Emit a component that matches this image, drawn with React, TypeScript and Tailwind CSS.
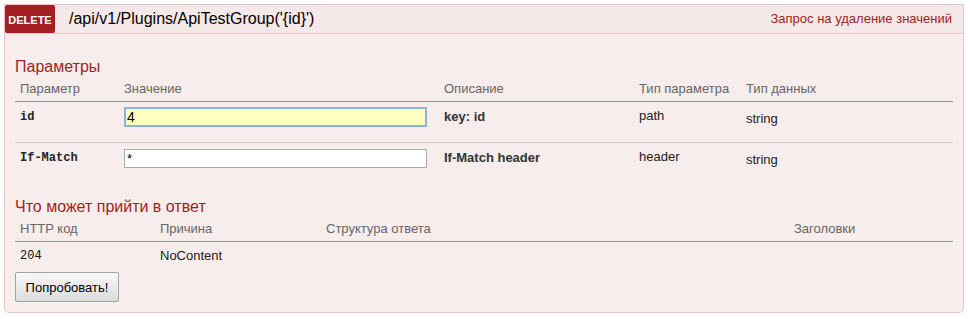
import React from "react";

const sans = { fontFamily: '"Liberation Sans", Arial, sans-serif' };

function ParamRow({
  name,
  value,
  focused,
  desc,
  ptype,
  dtype,
  last,
}: {
  name: string;
  value: string;
  focused?: boolean;
  desc: string;
  ptype: string;
  dtype: string;
  last?: boolean;
}) {
  return (
    <div
      className={
        "grid grid-cols-[109px_315px_195px_107px_212px] h-[41px] " +
        (last ? "" : "border-b border-[#d4d0d0]")
      }
    >
      <div className="pl-[5px] pt-[7px] leading-[16px] text-[12px] font-bold text-[#222] font-['Liberation_Mono',monospace]">
        {name}
      </div>
      <div className={focused ? "pt-[5px]" : "pt-[6px]"}>
        {focused ? (
          <div className="w-[303px] h-[20px] border-2 border-[#8cb0e4] rounded-[1px] bg-[#ffffc0] flex items-center pl-[1px] text-[14px] text-black leading-none">
            {value}
          </div>
        ) : (
          <div className="w-[303px] h-[19px] border border-[#a9a9a9] bg-white flex items-center pl-[2px] text-[13px] text-black leading-none">
            {value}
          </div>
        )}
      </div>
      <div className="pl-[5px] pt-[7px] leading-[16px] text-[13px] font-bold text-[#333]">
        {desc}
      </div>
      <div className="pl-[5px] pt-[6px] leading-[16px] text-[13px] text-[#222]">
        {ptype}
      </div>
      <div className="pl-[5px] pt-[9px] leading-[16px] text-[13px] text-[#222]">
        {dtype}
      </div>
    </div>
  );
}

export default function App() {
  return (
    <div className="bg-white w-[970px] h-[319px]" style={sans}>
      <div className="pt-[4px] pl-[4px] w-[964px]">
        <div className="w-[960px]">
          {/* heading */}
          <div className="h-[30px] border border-[#e8c6c7] bg-[#f5e8e8] flex items-center">
            <div className="w-[50px] h-[28px] rounded-[2px] bg-[#a41e22] text-white text-[11px] font-bold flex items-center justify-center pt-[2px]">
              DELETE
            </div>
            <div className="ml-[14px] text-[16px] text-black leading-[18px]">
              /api/v1/Plugins/ApiTestGroup('{"{"}id{"}"}')
            </div>
            <div className="ml-auto pr-[11px] text-[13px] text-[#a41e22] leading-[16px]">
              Запрос на удаление значений
            </div>
          </div>

          {/* content */}
          <div className="border border-t-0 border-[#e8c6c7] bg-[#f7eded] rounded-b-[5px] px-[10px] pt-[24px] pb-[10px]">
            <div className="text-[16px] leading-[18px] text-[#a41e22]">Параметры</div>
            <div className="grid grid-cols-[109px_315px_195px_107px_212px] border-b border-[#999] pt-[5px] pb-[5px] text-[13px] leading-[15px] text-[#666]">
              <div className="pl-[5px]">Параметр</div>
              <div className="pl-0">Значение</div>
              <div className="pl-[5px]">Описание</div>
              <div className="pl-[5px]">Тип параметра</div>
              <div className="pl-[5px]">Тип данных</div>
            </div>
            <ParamRow name="id" value="4" focused desc="key: id" ptype="path" dtype="string" />
            <ParamRow name="If-Match" value="*" desc="If-Match header" ptype="header" dtype="string" last />

            <div className="mt-[14px] text-[16px] leading-[18px] text-[#a41e22]">
              Что может прийти в ответ
            </div>
            <div className="grid grid-cols-[140px_166px_468px_164px] border-b border-[#999] pt-[5px] pb-[5px] text-[13px] leading-[15px] text-[#666]">
              <div className="pl-[5px]">HTTP код</div>
              <div className="pl-[5px]">Причина</div>
              <div className="pl-[5px]">Структура ответа</div>
              <div className="pl-[5px]">Заголовки</div>
            </div>
            <div className="grid grid-cols-[140px_166px_468px_164px] pt-[6px] text-[13px] leading-[16px] text-[#222]">
              <div className="pl-[5px] text-[12px] font-['Liberation_Mono',monospace] text-[#111]">204</div>
              <div className="pl-[5px]">NoContent</div>
              <div />
              <div />
            </div>
            <button className="mt-[8px] w-[104px] h-[30px] border border-[#a3a3a3] rounded-[2px] bg-gradient-to-b from-[#f8f8f8] to-[#dcdcdc] text-[13px] text-black leading-none">
              Попробовать!
            </button>
          </div>
        </div>
      </div>
    </div>
  );
}
